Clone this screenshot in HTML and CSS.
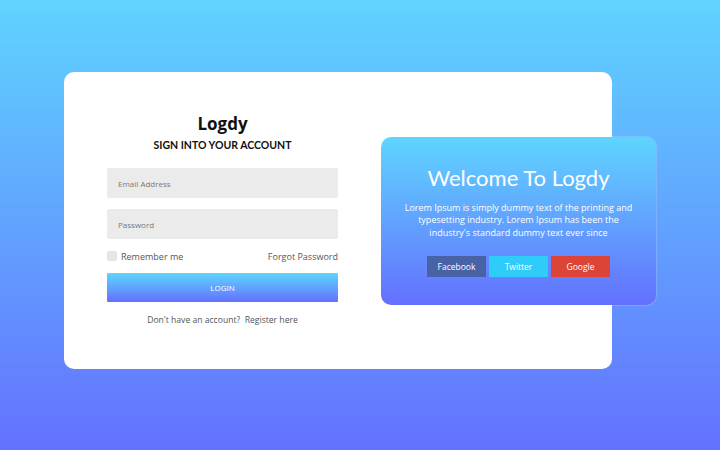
FILE: index.html
```html
<!DOCTYPE html>
<html>
<head>
<meta charset="utf-8">
<link rel="stylesheet" href="styles.css">
</head>
<body>
<div class="page">
  <div class="card">
    <form class="form">
      <h1 class="brand">Logdy</h1>
      <h2 class="subtitle">SIGN INTO YOUR ACCOUNT</h2>
      <div class="field">Email Address</div>
      <div class="field">Password</div>
      <div class="row">
        <label class="remember"><span class="check"></span>Remember me</label>
        <span class="forgot">Forgot Password</span>
      </div>
      <div class="login">LOGIN</div>
      <p class="register">Don't have an account?&nbsp; Register here</p>
    </form>
    <div class="welcome">
      <h2 class="welcome-title">Welcome To Logdy</h2>
      <p class="welcome-text">Lorem Ipsum is simply dummy text of the printing and typesetting industry. Lorem Ipsum has been the industry's standard dummy text ever since</p>
      <div class="socials">
        <span class="social fb">Facebook</span>
        <span class="social tw">Twitter</span>
        <span class="social gg">Google</span>
      </div>
    </div>
  </div>
</div>
</body>
</html>
```
FILE: styles.css
```css
* { box-sizing: border-box; }
html, body { margin: 0; height: 100%; }
body {
  background: linear-gradient(180deg, #5fd4fe 0%, #6471fe 100%);
  font-family: "Open Sans", "Liberation Sans", sans-serif;
  overflow: hidden;
}
.page {
  padding: 72px 0 0 64px;
}
.card {
  width: 548px;
  height: 297px;
  background: #fff;
  border-radius: 10px;
  display: flex;
  align-items: center;
  padding: 0 0 0 43px;
}
.form {
  width: 231px;
  flex-shrink: 0;
  display: flex;
  flex-direction: column;
  margin-top: -2px;
}
.brand {
  margin: 0;
  text-align: center;
  font-size: 17px;
  font-weight: 700;
  color: #111;
  line-height: 22px;
}
.subtitle {
  margin: 0;
  text-align: center;
  font-family: "Lato", sans-serif;
  font-size: 10.5px;
  font-weight: 700;
  color: #111;
  line-height: 16px;
  margin-top: 2px;
}
.field {
  height: 30px;
  background: #ebebeb;
  border-radius: 2px;
  font-size: 8px;
  color: #777;
  padding-left: 11px;
  display: flex;
  align-items: center;
  margin-top: 11px;
}
.subtitle + .field { margin-top: 15px; }
.row {
  display: flex;
  justify-content: space-between;
  align-items: center;
  margin-top: 11px;
  font-size: 9px;
  color: #555;
  height: 12px;
}
.remember { display: flex; align-items: center; }
.check {
  width: 10px;
  height: 10px;
  background: #e6e6e6;
  border-radius: 1px;
  margin-right: 4px;
}
.login {
  margin-top: 11px;
  height: 29px;
  background: linear-gradient(180deg, #5ed6fe 0%, #6470fe 100%);
  color: #fff;
  font-size: 8px;
  display: flex;
  align-items: center;
  justify-content: center;
  border-radius: 1px;
}
.register {
  margin: 12px 0 0;
  text-align: center;
  font-size: 8.6px;
  color: #555;
}
.welcome {
  width: 275px;
  height: 168px;
  margin-left: 43px;
  flex-shrink: 0;
  border-radius: 10px;
  background: linear-gradient(180deg, #5fd5fe 0%, #6470fe 100%);
  box-shadow: 0 0 2px rgba(255,255,255,0.6);
  display: flex;
  flex-direction: column;
  align-items: center;
  padding-top: 27px;
  color: #fff;
}
.welcome-title {
  margin: 0;
  font-family: "Lato", sans-serif;
  font-weight: 400;
  font-size: 22px;
  line-height: 28px;
}
.welcome-text {
  margin: 10px 0 0;
  width: 228px;
  text-align: center;
  font-size: 9px;
  line-height: 12.5px;
}
.socials {
  display: flex;
  gap: 3px;
  margin-top: 17px;
}
.social {
  width: 59px;
  height: 21px;
  display: flex;
  align-items: center;
  justify-content: center;
  font-size: 8.5px;
  color: #fff;
}
.fb { background: #4862a6; }
.tw { background: #2fcbf9; }
.gg { background: #db4437; }
```
